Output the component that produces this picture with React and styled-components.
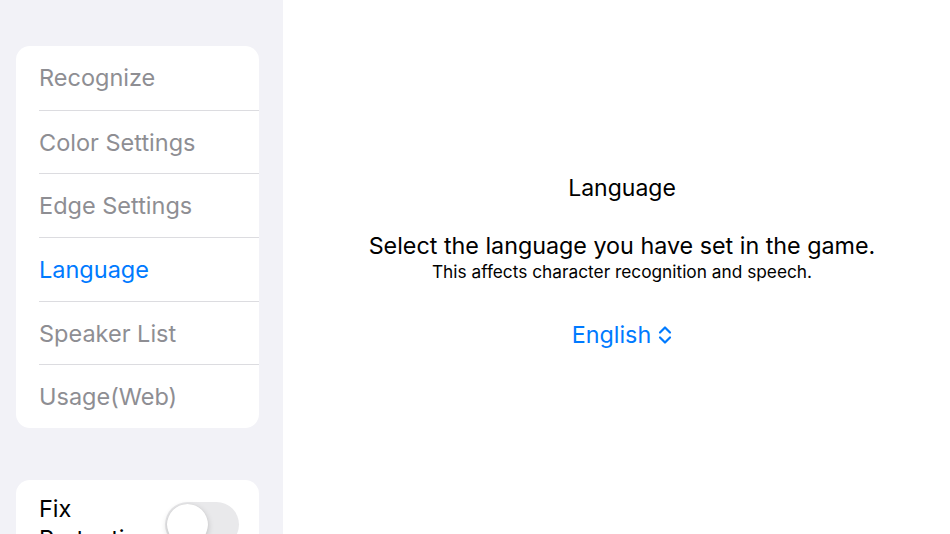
import React from "react";
import styled, { createGlobalStyle } from "styled-components";

const Global = createGlobalStyle`
  html, body { margin: 0; padding: 0; height: 100%; overflow: hidden; }
  body { font-family: Inter, "Noto Sans", sans-serif; -webkit-font-smoothing: antialiased; }
  #root { height: 100%; }
`;

const Page = styled.div`
  display: flex;
  width: 950px;
  height: 534px;
  overflow: hidden;
`;

const Sidebar = styled.aside`
  width: 283px;
  flex-shrink: 0;
  background: #f2f2f7;
  padding: 46px 24px 0 16px;
  box-sizing: border-box;
  display: flex;
  flex-direction: column;
  gap: 52px;
`;

const Card = styled.div`
  background: #fff;
  border-radius: 14px;
  padding-left: 23px;
  overflow: hidden;
  flex-shrink: 0;
`;

const Row = styled.div`
  height: 63.7px;
  display: flex;
  align-items: center;
  font-size: 23.5px;
  color: ${(p) => (p.$active ? "#007aff" : "#8e8e93")};
  border-top: ${(p) => (p.$first ? "none" : "1px solid #dcdce0")};
  box-sizing: border-box;
`;

const ToggleRow = styled.div`
  display: flex;
  align-items: flex-start;
  justify-content: space-between;
  padding: 14px 20px 0 0;
  height: 90px;
  box-sizing: border-box;
`;

const ToggleLabel = styled.div`
  font-size: 23.5px;
  line-height: 30px;
  color: #000;
  width: 110px;
`;

const Switch = styled.div`
  position: relative;
  width: 74px;
  height: 45px;
  border-radius: 23px;
  background: #e9e9eb;
  margin-top: 8px;
`;

const Knob = styled.div`
  position: absolute;
  left: 2px;
  top: 2px;
  width: 41px;
  height: 41px;
  border-radius: 50%;
  background: #fff;
  box-shadow: 0 2px 6px rgba(0, 0, 0, 0.18), 0 0 1px rgba(0, 0, 0, 0.1);
`;

const Main = styled.main`
  flex: 1;
  background: #fff;
  display: flex;
  flex-direction: column;
  align-items: center;
  padding: 173px 0 0 11px;
  box-sizing: border-box;
  color: #000;
`;

const Title = styled.div`
  font-size: 23px;
  line-height: 30px;
`;

const Headline = styled.div`
  margin-top: 28px;
  font-size: 23.3px;
  line-height: 30px;
`;

const Sub = styled.div`
  font-size: 17.3px;
  line-height: 21px;
`;

const Picker = styled.div`
  margin-top: 38px;
  display: flex;
  align-items: center;
  gap: 7px;
  color: #007aff;
  font-size: 23.3px;
  line-height: 30px;
`;

const items = ["Recognize", "Color Settings", "Edge Settings", "Language", "Speaker List", "Usage(Web)"];

export default function App() {
  return (
    <Page>
      <Global />
      <Sidebar>
        <Card>
          {items.map((t, i) => (
            <Row key={t} $first={i === 0} $active={t === "Language"}>
              {t}
            </Row>
          ))}
        </Card>
        <Card>
          <ToggleRow>
            <ToggleLabel>Fix Protection</ToggleLabel>
            <Switch>
              <Knob />
            </Switch>
          </ToggleRow>
        </Card>
      </Sidebar>
      <Main>
        <Title>Language</Title>
        <Headline>Select the language you have set in the game.</Headline>
        <Sub>This affects character recognition and speech.</Sub>
        <Picker>
          English
          <svg width="14" height="20" viewBox="0 0 14 20" fill="none" stroke="#007aff" strokeWidth="2.2" strokeLinecap="round" strokeLinejoin="round">
            <polyline points="2,7.5 7,2.5 12,7.5" />
            <polyline points="2,12.5 7,17.5 12,12.5" />
          </svg>
        </Picker>
      </Main>
    </Page>
  );
}
